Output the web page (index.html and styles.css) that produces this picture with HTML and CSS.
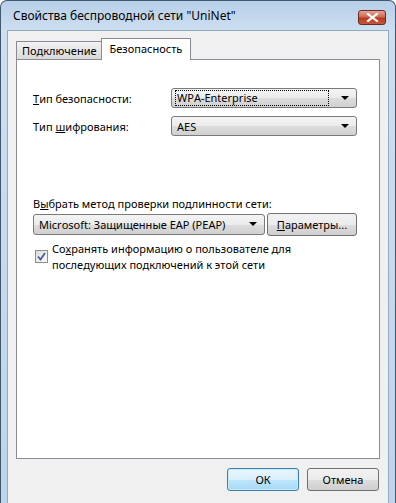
FILE: index.html
```html
<!DOCTYPE html>
<html lang="ru">
<head>
    <meta charset="UTF-8">
    <meta name="viewport" content="width=device-width, initial-scale=1.0">
    <title>Свойства беспроводной сети "UniNet"</title>
    <link rel="stylesheet" href="styles.css">
</head>
<body>
    <div class="window">
        <div class="titlebar">
            <span class="title">Свойства беспроводной сети "UniNet"</span>
            <button class="close" title="Закрыть">
                <svg width="13" height="9" viewBox="0 0 13 9">
                    <path d="M2 1 L11 8 M11 1 L2 8" stroke="#fff" stroke-width="2.2" stroke-linecap="square"/>
                </svg>
            </button>
        </div>
        <div class="client">
            <div class="tabs">
                <div class="tab">Подключение</div>
                <div class="tab active">Безопасность</div>
            </div>
            <div class="panel">
                <div class="row first">
                    <label class="lbl"><u>Т</u>ип безопасности:</label>
                    <div class="select wide"><span class="focus">WPA-Enterprise</span><span class="arrow"></span></div>
                </div>
                <div class="row">
                    <label class="lbl">Тип <u>ш</u>ифрования:</label>
                    <div class="select wide"><span class="val">AES</span><span class="arrow"></span></div>
                </div>

                <p class="method">В<u>ы</u>брать метод проверки подлинности сети:</p>
                <div class="method-row">
                    <div class="select eap"><span class="val">Microsoft: Защищенные EAP (PEAP)</span><span class="arrow"></span></div>
                    <button class="btn params"><u>П</u>араметры...</button>
                </div>

                <div class="check-row">
                    <span class="checkbox">
                        <svg width="9" height="9" viewBox="0 0 9 9">
                            <path d="M1 4.5 L3.5 7.5 L8 1" fill="none" stroke="#4b5f99" stroke-width="1.8"/>
                        </svg>
                    </span>
                    <span class="check-text">Со<u>х</u>ранять информацию о пользователе для<br>последующих подключений к этой сети</span>
                </div>
            </div>
            <div class="footer">
                <button class="btn default">ОК</button>
                <button class="btn">Отмена</button>
            </div>
        </div>
    </div>
</body>
</html>
```

FILE: styles.css
```css
body {
    margin: 0;
    padding: 0;
    background: #ffffff;
    font-family: "Noto Sans", "Open Sans", sans-serif;
    font-size: 11px;
    color: #000;
    font-kerning: none;
}

.window {
    width: 396px;
    height: 503px;
    box-sizing: border-box;
    border: 1px solid #40576f;
    border-bottom: none;
    border-radius: 7px 7px 0 0;
    background: linear-gradient(to bottom, #b8cfe9 0px, #cddff1 30px, #bfd4ea 100%);
    padding: 0 6px 0 6px;
    display: flex;
    flex-direction: column;
}

.titlebar {
    height: 29px;
    display: flex;
    align-items: center;
    justify-content: space-between;
    flex-shrink: 0;
}

.title {
    padding-left: 6px;
    font-size: 12px;
    color: #000;
}

.close {
    width: 28px;
    height: 15px;
    margin-right: 3px;
    margin-top: 4px;
    padding: 0;
    border: 1px solid #6b2a20;
    border-radius: 3px;
    background: linear-gradient(to bottom, #e6a595 0%, #cf6a55 45%, #b73a22 55%, #c9563a 100%);
    display: flex;
    align-items: center;
    justify-content: center;
}

.client {
    flex: 1;
    background: #f0f0f0;
    border: 1px solid #93a9c0;
    border-bottom: none;
    display: flex;
    flex-direction: column;
    padding: 5px 8px 0 8px;
}

.tabs {
    display: flex;
    align-items: flex-end;
    height: 23px;
    position: relative;
    z-index: 1;
}

.tab {
    height: 15px;
    padding: 1px 4px 1px 5px;
    border: 1px solid #898c95;
    border-bottom: none;
    background: linear-gradient(to bottom, #f2f2f2, #dadada);
    line-height: 15px;
}

.tab.active {
    height: 21px;
    padding: 0 8px;
    margin-left: -1px;
    margin-bottom: -1px;
    background: #ffffff;
    line-height: 19px;
}

.panel {
    height: 398px;
    background: #ffffff;
    border: 1px solid #898c95;
    padding: 0 22px 0 16px;
}

.row {
    display: flex;
    align-items: center;
    justify-content: space-between;
    height: 20px;
    margin-top: 8px;
}

.row.first {
    margin-top: 28px;
}

.lbl {
    display: block;
}

.select {
    position: relative;
    box-sizing: border-box;
    height: 20px;
    border: 1px solid #7a7a7a;
    border-radius: 3px;
    background: linear-gradient(to bottom, #f4f4f4 0%, #ebebeb 50%, #dddddd 51%, #d0d0d0 100%);
    display: flex;
    align-items: center;
    padding-left: 3px;
}

.select.wide {
    width: 186px;
}

.select.eap {
    width: 232px;
}

.focus {
    border: 1px dotted #000;
    padding: 0 1px;
    line-height: 14px;
    width: 150px;
}

.val {
    padding-left: 2px;
}

.arrow {
    position: absolute;
    right: 7px;
    top: 7px;
    width: 0;
    height: 0;
    border-left: 4px solid transparent;
    border-right: 4px solid transparent;
    border-top: 4px solid #000;
}

.method {
    margin: 60px 0 0 0;
    line-height: 16px;
}

.method-row {
    display: flex;
    align-items: center;
    justify-content: space-between;
    margin-top: 1px;
}

.method-row .select {
    height: 21px;
}

.btn {
    font-family: "Noto Sans", "Open Sans", sans-serif;
    font-size: 11px;
    color: #000;
    height: 23px;
    border: 1px solid #707070;
    border-radius: 3px;
    background: linear-gradient(to bottom, #f2f2f2 0%, #ebebeb 50%, #dddddd 51%, #cfcfcf 100%);
    padding: 0;
}

.btn.params {
    width: 90px;
}

.check-row {
    display: flex;
    align-items: flex-start;
    margin-top: 5px;
    padding-left: 2px;
}

.checkbox {
    width: 11px;
    height: 11px;
    border: 1px solid #8e8f8f;
    background: linear-gradient(to bottom right, #dcdcdc, #fafafa);
    margin-top: 9px;
    margin-right: 4px;
    display: flex;
    align-items: center;
    justify-content: center;
    flex-shrink: 0;
}

.check-text {
    line-height: 16px;
    width: 250px;
}

.footer {
    display: flex;
    justify-content: flex-end;
    gap: 8px;
    padding-top: 9px;
    padding-right: 1px;
}

.footer .btn {
    width: 72px;
}

.btn.default {
    border-color: #3c7fb1;
    background: linear-gradient(to bottom, #eaf6fd 0%, #d9f0fc 50%, #bee6fd 51%, #a7d9f5 100%);
    box-shadow: inset 0 0 0 1px #c5eafa;
}
```
